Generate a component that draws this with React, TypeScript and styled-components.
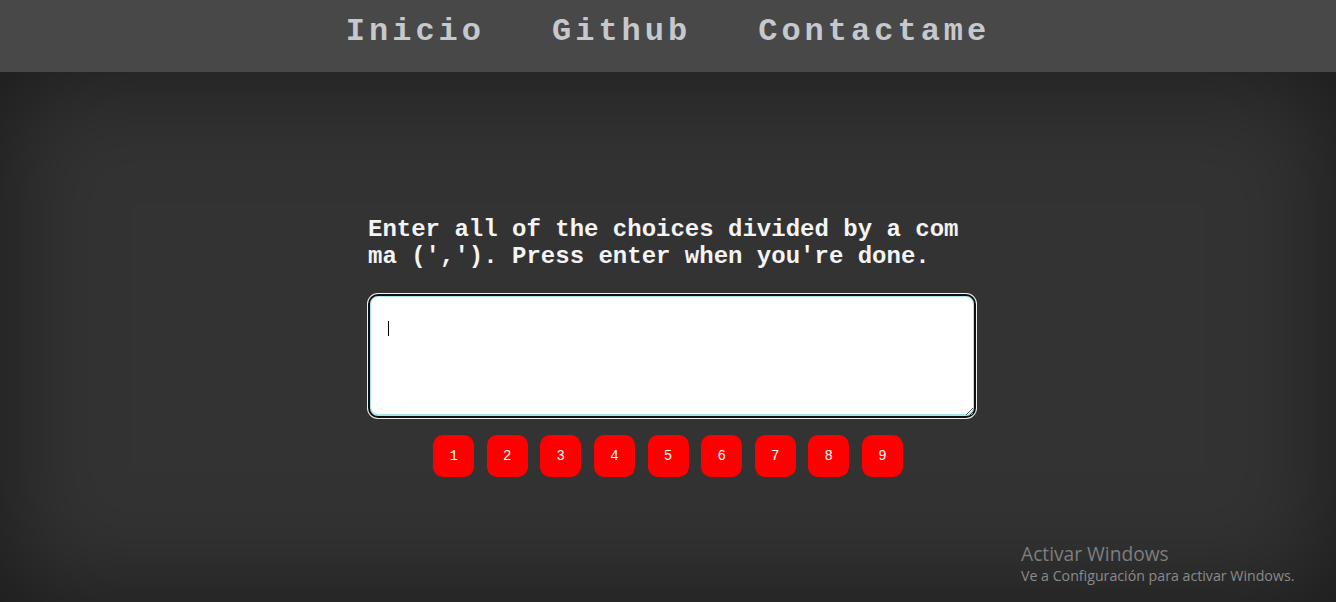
import React from "react";
import styled, { createGlobalStyle } from "styled-components";

const GlobalStyle = createGlobalStyle`
  html, body {
    margin: 0;
    padding: 0;
    background: #333333;
    height: 100%;
  }
  #root {
    height: 100%;
  }
`;

const numbers = [1, 2, 3, 4, 5, 6, 7, 8, 9];

export default () => (
  <Page>
    <GlobalStyle />
    <Header>
      <Nav>
        <NavLink>Inicio</NavLink>
        <NavLink>Github</NavLink>
        <NavLink>Contactame</NavLink>
      </Nav>
    </Header>
    <Main>
      <Form>
        <Prompt>
          Enter all of the choices divided by a comma (','). Press enter when you're done.
        </Prompt>
        <Field>
          <Choices autoFocus spellCheck={false} />
          <Caret />
        </Field>
        <Buttons>
          {numbers.map((n) => (
            <NumButton key={n} type="button">
              {n}
            </NumButton>
          ))}
        </Buttons>
      </Form>
      <Watermark>
        <WatermarkTitle>Activar Windows</WatermarkTitle>
        <WatermarkText>Ve a Configuración para activar Windows.</WatermarkText>
      </Watermark>
    </Main>
  </Page>
);

const Page = styled.div`
  display: flex;
  flex-direction: column;
  height: 602px;
  overflow: hidden;
`;

const Header = styled.header`
  height: 72px;
  flex-shrink: 0;
  background: #484848;
  box-sizing: border-box;
  padding-top: 13px;
`;

const Nav = styled.nav`
  display: flex;
  justify-content: center;
  gap: 67px;
`;

const NavLink = styled.a`
  font-family: "Liberation Mono", "Courier New", monospace;
  font-weight: bold;
  font-size: 32px;
  letter-spacing: 4px;
  color: #c5c8cc;
  cursor: pointer;
`;

const Main = styled.main`
  position: relative;
  flex: 1;
  background: #333333;
  box-shadow: inset 0 0 110px rgba(0, 0, 0, 0.5);
  padding-top: 144px;
  box-sizing: border-box;
`;

const Form = styled.div`
  width: 600px;
  margin: 0 auto;
  display: flex;
  flex-direction: column;
`;

const Prompt = styled.p`
  margin: 0;
  font-family: "Liberation Mono", "Courier New", monospace;
  font-weight: bold;
  font-size: 24px;
  color: #f4f4f4;
  word-break: break-all;
`;

const Field = styled.div`
  position: relative;
  margin-top: 24px;
  height: 124px;
`;

const Choices = styled.textarea`
  display: block;
  width: 608px;
  height: 124px;
  margin: 0;
  box-sizing: border-box;
  padding: 18px;
  border: 2px solid #111;
  border-radius: 10px;
  background: #fff;
  box-shadow: 0 0 0 1px #f2f2f2, inset 0 0 0 1px #a8e6ec, inset 0 -1px 0 1px #a8e6ec;
  outline: none;
  resize: vertical;
  font-family: "Liberation Mono", monospace;
  font-size: 14px;
  caret-color: #000;
`;

const Caret = styled.span`
  position: absolute;
  left: 20px;
  top: 27px;
  width: 1px;
  height: 15px;
  background: #000;
  pointer-events: none;
`;

const Buttons = styled.div`
  display: flex;
  justify-content: center;
  gap: 12.6px;
  margin-top: 17px;
`;

const NumButton = styled.button`
  width: 41px;
  height: 42px;
  border: none;
  border-radius: 10px;
  background: #ff0000;
  color: #fff;
  font-family: "Liberation Mono", "Courier New", monospace;
  font-size: 14px;
  padding: 0;
  cursor: pointer;
`;

const Watermark = styled.div`
  position: absolute;
  left: 1021px;
  top: 469px;
  font-family: "Open Sans", "Noto Sans", sans-serif;
  color: #7e7e7e;
`;

const WatermarkTitle = styled.div`
  font-size: 19.2px;
  line-height: 25px;
`;

const WatermarkText = styled.div`
  font-size: 14.2px;
  line-height: 20px;
  color: #8a8a8a;
`;
